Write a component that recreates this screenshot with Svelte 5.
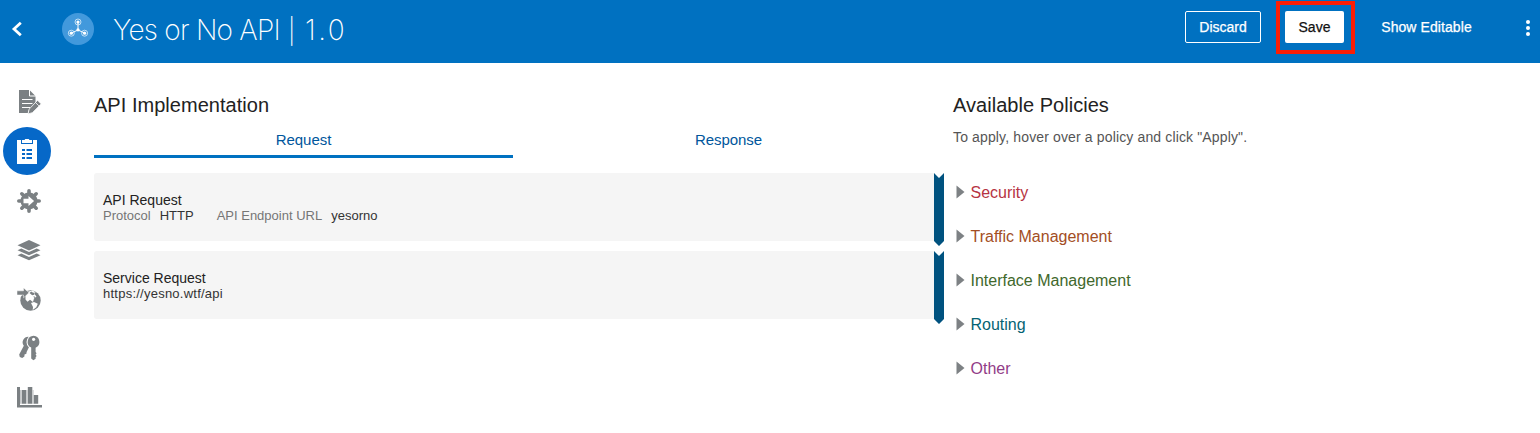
<script>
  const facts = [
    { label: 'Protocol', value: 'HTTP' },
    { label: 'API Endpoint URL', value: 'yesorno' }
  ];
  const policies = [
    { name: 'Security', tone: 'red' },
    { name: 'Traffic Management', tone: 'brown' },
    { name: 'Interface Management', tone: 'green' },
    { name: 'Routing', tone: 'teal' },
    { name: 'Other', tone: 'purple' }
  ];
</script>

<header class="topbar">
  <svg class="back" width="12" height="16" viewBox="0 0 12 16"><path d="M9.8 1.8 3 8l6.8 6.2" fill="none" stroke="#fff" stroke-width="2.8" /></svg>
  <svg class="logo" width="32" height="32" viewBox="0 0 32 32">
    <circle cx="16" cy="16" r="16" fill="#4299dc" />
    <path d="M16 9v8M16 17l-6.5 3M16 17l6.5 3" stroke="#fff" stroke-width="1" />
    <g fill="none" stroke="#e0f0fb" stroke-width=".8"><circle cx="16" cy="9" r="3" /><circle cx="9.3" cy="20.2" r="3" /><circle cx="22.6" cy="20.2" r="3" /></g>
    <g fill="#fff"><circle cx="16" cy="9" r="1.6" /><circle cx="16" cy="16.8" r="1.6" /><circle cx="9.3" cy="20.2" r="1.6" /><circle cx="22.6" cy="20.2" r="1.6" /></g>
  </svg>
  <h1><span class="name">Yes or No API</span> <span class="divider">|</span> <span class="version">1.0</span></h1>
  <div class="actions">
    <button class="discard">Discard</button>
    <div class="highlight"><button class="save">Save</button></div>
    <button class="show">Show Editable</button>
    <svg class="more" width="4" height="18" viewBox="0 0 4 18" fill="#fff"><circle cx="2" cy="3" r="2" /><circle cx="2" cy="9" r="2" /><circle cx="2" cy="15" r="2" /></svg>
  </div>
</header>

<div class="body">
  <nav>
    <span class="item edit">
      <svg width="24" height="26" viewBox="0 0 24 26">
        <path d="M1 1h10.5L17.500 7v7.500L10 22v2H1z" fill="#7b8083" />
        <path d="M11.500 1v6H18" fill="none" stroke="#fff" stroke-width="1" />
        <path d="M4 10.500h10.500M4 14.500h10.500M4 18.500h8" stroke="#fff" stroke-width="1.200" />
        <path d="m19.600 11.300 3.600 3.600-8.800 8.800-4.400 1.200 1.200-4.800z" fill="#7b8083" stroke="#fff" stroke-width=".8" />
        <path d="m17.500 13.500 3.400 3.400" stroke="#fff" stroke-width=".8" />
      </svg>
    </span>
    <span class="item active">
      <svg width="20" height="25" viewBox="0 0 20 25">
        <path d="M0 1h4v4h12V1h4v24H0z" fill="#fff" /><path d="M5 1h2.5l.8-1h3.400l.8 1H15v3H5z" fill="#fff" />
        <path d="M5 11h3M5 15h3M5 19h3M9.500 11H15M9.500 15H15M9.500 19H15" stroke="#0668c8" stroke-width="2" />
      </svg>
    </span>
    <span class="item">
      <svg width="26" height="26" viewBox="0 0 26 26" fill="#7b8083">
        <g stroke="#7b8083" stroke-width="3.600" stroke-linecap="round"><path d="M13 2.800v20.400M2.800 13h20.400M5.800 5.800l14.400 14.400M20.200 5.800 5.800 20.200" /></g>
        <circle cx="13" cy="13" r="8.500" />
        <path d="M7.500 10.800h5V8l5.600 5-5.600 5v-2.800h-5z" fill="#fff" />
      </svg>
    </span>
    <span class="item">
      <svg width="24" height="22" viewBox="0 0 24 22" fill="#7b8083">
        <path d="m12 1 11.500 5.200L12 11.400.5 6.200z" />
        <path d="m.5 11.200 3.800-1.700 7.700 3.400 7.700-3.400 3.800 1.700L12 16.200z" />
        <path d="m.5 16.200 3.800-1.700 7.700 3.400 7.700-3.400 3.800 1.700L12 21.300z" />
      </svg>
    </span>
    <span class="item globe">
      <svg width="26" height="24" viewBox="0 0 26 24">
        <circle cx="13.500" cy="12.500" r="10.200" fill="#7b8083" />
        <path d="m8.500 8 3-4.500 4-1 3 1.500-1 2 2 2.500-2.500 2-1 3.500-3-2.300-2.500 2-2-2.200z" fill="#fff" />
        <path d="m12.500 5 1.700-1.600 2 1.300 1.500-.1-.5 2.200-2 .4zM16.500 8l1.800 1-1.200 1.300z" fill="#7b8083" />
        <path d="m14 15 3-1 3.800 1.800-1.500 3.400-3.600 2.800.3-3z" fill="#fff" />
        <path d="M0 2.800h6.500V-.2L12 4.800l-5.500 5V7H0z" fill="#7b8083" stroke="#fff" stroke-width=".5" />
      </svg>
    </span>
    <span class="item keys">
      <svg width="24" height="26" viewBox="0 0 24 26">
        <path d="M10.500 1.800a5.600 5.600 0 0 0-4.700 9L1.200 19.500l.6 2.400 2.400 1 2.200-1.300.1-2 1.900-.8.2-1.800L13 8z" fill="#7b8083" />
        <circle cx="15.500" cy="7" r="7" fill="#fff" />
        <path d="M15.600.8a6.200 6.200 0 0 0-2.400 11.800V23.500l2.200 1.800 2.200-1.600v-1.500l1-1.300-1-1.300 1-1.300-1-1.300v-4.300A6.200 6.200 0 0 0 15.600.8z" fill="#7b8083" />
        <circle cx="15.600" cy="4.300" r="1.600" fill="#fff" />
      </svg>
    </span>
    <span class="item chart">
      <svg width="25" height="22" viewBox="0 0 25 22" fill="#7b8083">
        <path d="M0 1h3v18h22v2.500H0z" /><path d="M4.800 4h4.300v13.800H4.800zM10.800 1h4.500v16.800h-4.500zM16.600 9h4.600v8.800h-4.600z" />
        <path d="M3 4h1.800v13.800H3zM9.100 4h1.700v13.800H9.100zM15.300 4h1.300v13.800h-1.300z" fill="#c6c8ca" />
      </svg>
    </span>
  </nav>

  <main>
    <h2>API Implementation</h2>
    <div class="tabs"><span class="tab selected">Request</span><span class="tab">Response</span></div>
    <section class="card">
      <div class="info">
        <h3>API Request</h3>
        <p>{#each facts as f}<span class="fact"><span class="label">{f.label}</span><span>{f.value}</span></span>{/each}</p>
      </div>
      <svg width="10" height="73" viewBox="0 0 10 73"><path d="M0 0 5 5l5-5v68l-5 5-5-5z" fill="#00527f" /></svg>
    </section>
    <section class="card">
      <div class="info">
        <h3>Service Request</h3>
        <p class="url">https://yesno.wtf/api</p>
      </div>
      <svg width="10" height="73" viewBox="0 0 10 73"><path d="M0 0 5 5l5-5v68l-5 5-5-5z" fill="#00527f" /></svg>
    </section>
  </main>

  <aside>
    <h2>Available Policies</h2>
    <p class="hint">To apply, hover over a policy and click "Apply".</p>
    <ul>
      {#each policies as p}
        <li class={p.tone}>
          <svg width="9" height="14" viewBox="0 0 9 14"><path d="M.5.5 8.500 7l-8 6.500z" fill="#7d8184" /></svg>
          <span>{p.name}</span>
        </li>
      {/each}
    </ul>
  </aside>
</div>

<style>
  :global(body) { margin: 0; background: #fff; }
  :global(#app) { font-family: "Liberation Sans", Arial, sans-serif; color: #222; }
  h1, h2, h3, p, ul { margin: 0; padding: 0; font-weight: 400; }
  svg { display: block; flex: none; }
  button { font: inherit; border: 0; background: none; color: #fff; padding: 0; border-radius: 2px; box-sizing: border-box; height: 32px; white-space: nowrap; -webkit-text-stroke: .25px currentColor; }
  .topbar { height: 63px; box-sizing: border-box; background: #0071c1; display: flex; align-items: flex-start; padding-left: 11px; overflow: hidden; }
  .back { margin-top: 21px; }
  .logo { margin: 13px 0 0 39px; }
  h1 { display: flex; margin: 13px 0 0 19px; font: 200 28px/34px Inter, sans-serif; color: #fff; white-space: nowrap; }
  .name { width: 175px; letter-spacing: -.75px; }
  .divider { width: 17px; font-size: 25px; line-height: 37px; }
  .version { letter-spacing: 2.5px; }
  .actions { margin-left: auto; display: flex; align-items: flex-start; font-size: 14px; padding-right: 10px; }
  .discard { width: 76px; border: 1px solid #fff; margin-top: 11px; }
  .highlight { margin: 1px 0 0 15px; border: 4px solid #fb1e05; padding: 6px 7px 7px 5px; width: 59px; }
  .save { display: block; width: 59px; background: #fff; color: #111; }
  .show { width: 91px; margin: 11px 0 0 26px; letter-spacing: .08px; }
  .more { margin: 19px 0 0 54px; }
  .body { display: flex; }
  nav { width: 94px; flex: none; box-sizing: border-box; padding: 14px 0 0 3px; }
  .item { display: flex; align-items: center; justify-content: center; width: 52px; height: 49.3px; box-sizing: border-box; }
  .edit { padding-left: 2px; }
  .globe { padding-left: 2px; }
  .keys { padding-left: 1px; padding-bottom: 1px; }
  .chart { padding-bottom: 2px; }
  .active { width: 48px; height: 48px; margin: 1px 0; border-radius: 50%; background: #0668c8; }
  main { width: 850px; flex: none; padding-top: 30px; }
  h2 { font-size: 20px; line-height: 24px; white-space: nowrap; letter-spacing: .03px; }
  .tabs { display: grid; grid-template-columns: 419px 431px; margin-top: 5px; }
  .tab { height: 33px; line-height: 35px; text-align: center; font-size: 15px; letter-spacing: -.05px; color: #00569c; }
  .selected { border-bottom: 3px solid #0071c1; }
  .card { display: flex; margin-top: 15px; height: 68px; }
  .card + .card { margin-top: 10px; }
  .info { width: 840px; box-sizing: border-box; padding: 19px 9px; background: #f5f5f5; border-radius: 3px 0 0 3px; }
  h3 { font-size: 14px; line-height: 16px; }
  .info p { font-size: 13px; line-height: 15px; color: #333; white-space: nowrap; display: flex; gap: 23px; }
  .info .url { letter-spacing: .24px; }
  .fact { display: flex; gap: 9px; }
  .label { color: #767676; }
  aside { padding: 30px 0 0 9px; }
  .hint { font-size: 14px; line-height: 18px; margin-top: 11px; color: #555; white-space: nowrap; letter-spacing: .14px; }
  ul { list-style: none; margin-top: 24px; }
  li { display: flex; align-items: center; gap: 5.5px; height: 44px; font-size: 16px; padding-left: 3px; }
  li span { padding-top: 2px; }
  .red { color: #b63443; } .brown { color: #a34e24; } .green { color: #41682c; } .teal { color: #056373; } .purple { color: #923c87; }
</style>
